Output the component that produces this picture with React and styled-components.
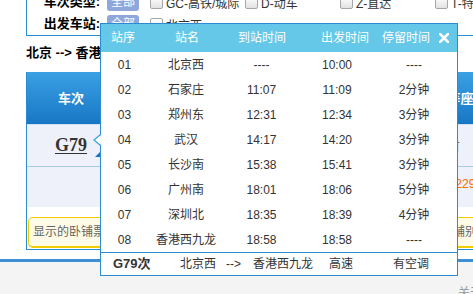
import React from "react";
import styled, { createGlobalStyle } from "styled-components";

const GlobalStyle = createGlobalStyle`
  html, body {
    margin: 0;
    padding: 0;
    background: #fff;
  }
  body {
    font-family: "Liberation Sans", "Noto Sans CJK SC", sans-serif;
    font-size: 12px;
    color: #333;
  }
`;

const Page = styled.div`
  position: relative;
  width: 100%;
  height: 294px;
  overflow: hidden;
  display: flex;
  flex-direction: column;
`;

const Main = styled.div`
  width: 960px;
  padding: 0 0 9px 26px;
`;

const FilterBox = styled.div`
  margin-top: -9px;
  border-left: 1px solid #2b8bd0;
  border-bottom: 1px solid #2b8bd0;
`;

const FilterRow = styled.div`
  display: flex;
  align-items: center;
  height: 22px;
`;

const FilterLabel = styled.span`
  width: 73px;
  text-align: right;
  font-size: 13px;
  font-weight: bold;
  color: #000;
  line-height: 22px;
`;

const AllTag = styled.span`
  margin: 0 11px 0 7px;
  width: 32px;
  height: 18px;
  line-height: 18px;
  text-align: center;
  background: #8fa7da;
  color: #fff;
  border-radius: 3px;
`;

const Option = styled.label`
  display: flex;
  align-items: center;
  width: 95px;
  flex-shrink: 0;
  color: #333;
`;

const Check = styled.span`
  box-sizing: border-box;
  width: 13px;
  height: 13px;
  margin-right: 3px;
  border: 1px solid #a6a6a6;
  border-radius: 2px;
  background: linear-gradient(#fff, #e2e2e2);
`;

const RouteTitle = styled.div`
  margin: 9px 0 11px;
  line-height: 16px;
  font-size: 13px;
  font-weight: bold;
  color: #000;
`;

const ResultBox = styled.div`
  border-left: 1px solid #2b8bd0;
  border-bottom: 1px solid #2b8bd0;
`;

const cols = "88px 80px 80px 70px 73px 72px 72px 72px";

const TableHead = styled.div`
  display: grid;
  grid-template-columns: ${cols};
  align-items: center;
  height: 52px;
  background: linear-gradient(#3ba0e4, #1877c5);
  color: #fff;
  font-size: 13px;
  font-weight: bold;
  text-align: center;
  line-height: 17px;
`;

const TrainRow = styled.div`
  display: grid;
  grid-template-columns: ${cols};
  align-items: center;
  box-sizing: border-box;
  height: ${(p) => p.$h}px;
  background: #eef1f9;
  border-top: ${(p) => (p.$first ? "1px solid #cfe0f1" : "none")};
  border-bottom: ${(p) => (p.$first ? "1px solid #a8cdea" : "none")};
  text-align: center;
`;

const TrainCell = styled.div`
  position: relative;
  height: 100%;
  display: flex;
  align-items: center;
  justify-content: center;
`;

const TrainLink = styled.a`
  font-family: "Liberation Serif", serif;
  font-size: 18px;
  font-weight: bold;
  color: #333;
  text-decoration: underline;
  text-underline-offset: 2px;
`;

const Corner = styled.span`
  position: absolute;
  right: 15px;
  top: 27px;
  width: 0;
  height: 0;
  border-bottom: 5px solid #1d6fd8;
  border-left: 5px solid transparent;
`;

const Price = styled.div`
  align-self: start;
  padding: 10px 0 0 24px;
  text-align: left;
  line-height: 14px;
  color: #ff6a00;
  white-space: nowrap;
`;

const Notice = styled.div`
  box-sizing: border-box;
  margin: 10px 0 1px 1px;
  width: 900px;
  height: 31px;
  padding-left: 4px;
  line-height: 28px;
  border: 1px solid #f2cc00;
  border-bottom-width: 2px;
  border-radius: 5px;
  background: #fffbe6;
  color: #666;
  white-space: nowrap;
`;

const BottomBar = styled.div`
  flex: 1;
  border-top: 3px solid #3d8fd6;
  background: #f4f4f4;
  padding: 24px 0 0 458px;
  line-height: 14px;
  color: #999;
  white-space: nowrap;
`;

const Popup = styled.div`
  position: absolute;
  left: 100px;
  top: 23px;
  width: 358px;
  box-sizing: border-box;
  border: 1px solid #2b8bd0;
  background: #fff;
`;

const Arrow = styled.span`
  position: absolute;
  left: -8px;
  top: 110px;
  width: 0;
  height: 0;
  border-top: 6px solid transparent;
  border-bottom: 6px solid transparent;
  border-right: 7px solid #3aa7dc;

  &::after {
    content: "";
    position: absolute;
    left: 2px;
    top: -5px;
    border-top: 5px solid transparent;
    border-bottom: 5px solid transparent;
    border-right: 6px solid #fff;
  }
`;

const PopHead = styled.div`
  display: grid;
  grid-template-columns: 64px 63px 83px 61px 57px 1fr;
  align-items: center;
  height: 28px;
  padding-left: 10px;
  background: #66c8e8;
  color: #fff;
  line-height: 16px;
`;

const CloseBtn = styled.span`
  display: flex;
  align-items: center;
  cursor: pointer;
`;

const StopRow = styled.div`
  display: grid;
  grid-template-columns: 47px 76px 75px 76px 78px;
  align-items: center;
  height: 25px;
  text-align: center;
  line-height: 16px;
  color: #333;
`;

const PopFoot = styled.div`
  display: grid;
  grid-template-columns: 67px 46px 27px 76px 64px 1fr;
  align-items: center;
  height: 22px;
  padding-left: 12px;
  border-top: 1px solid #2b8bd0;
  line-height: 16px;
  color: #333;
  white-space: nowrap;
`;

const FootTrain = styled.span`
  font-size: 13px;
  font-weight: bold;
`;

const stops = [
  ["01", "北京西", "----", "10:00", "----"],
  ["02", "石家庄", "11:07", "11:09", "2分钟"],
  ["03", "郑州东", "12:31", "12:34", "3分钟"],
  ["04", "武汉", "14:17", "14:20", "3分钟"],
  ["05", "长沙南", "15:38", "15:41", "3分钟"],
  ["06", "广州南", "18:01", "18:06", "5分钟"],
  ["07", "深圳北", "18:35", "18:39", "4分钟"],
  ["08", "香港西九龙", "18:58", "18:58", "----"],
];

const trainTypes = ["GC-高铁/城际", "D-动车", "Z-直达", "T-特快", "K-快速"];

export default function App() {
  return (
    <Page>
      <GlobalStyle />
      <Main>
        <FilterBox>
          <FilterRow>
            <FilterLabel>车次类型:</FilterLabel>
            <AllTag>全部</AllTag>
            {trainTypes.map((t) => (
              <Option key={t}>
                <Check />
                {t}
              </Option>
            ))}
          </FilterRow>
          <FilterRow>
            <FilterLabel>出发车站:</FilterLabel>
            <AllTag>全部</AllTag>
            <Option>
              <Check />
              北京西
            </Option>
          </FilterRow>
        </FilterBox>

        <RouteTitle>北京 --&gt; 香港西九龙（12月30日 周日）共计1个车次</RouteTitle>

        <ResultBox>
          <TableHead>
            <span>车次</span>
            <span>出发站<br />到达站</span>
            <span>出发时间<br />到达时间</span>
            <span>历时</span>
            <span>商务座<br />特等座</span>
            <span>一等座</span>
            <span>二等座</span>
            <span>高级<br />软卧</span>
          </TableHead>
          <TrainRow $h={43} $first>
            <TrainCell>
              <TrainLink>G79</TrainLink>
              <Corner />
            </TrainCell>
            <span>北京西</span>
            <span>10:00</span>
            <span>08:58</span>
            <span>有</span>
            <span>有</span>
            <span>有</span>
            <span>--</span>
          </TrainRow>
          <TrainRow $h={40}>
            <span />
            <span />
            <span />
            <span />
            <span />
            <Price>¥1229.0</Price>
            <span />
            <span />
          </TrainRow>
          <Notice>
            显示的卧铺票价均为上铺票价，供您参考。具体票价以您确认支付时实际购买的铺别票价为准。
          </Notice>
        </ResultBox>
      </Main>

      <BottomBar>关于我们 | 网站声明</BottomBar>

      <Popup>
        <Arrow />
        <PopHead>
          <span>站序</span>
          <span>站名</span>
          <span>到站时间</span>
          <span>出发时间</span>
          <span>停留时间</span>
          <CloseBtn>
            <svg width="10" height="10" viewBox="0 0 10 10">
              <path d="M1 1L9 9M9 1L1 9" stroke="#fff" strokeWidth="2.6" strokeLinecap="square" />
            </svg>
          </CloseBtn>
        </PopHead>
        {stops.map((s) => (
          <StopRow key={s[0]}>
            {s.map((v, i) => (
              <span key={i}>{v}</span>
            ))}
          </StopRow>
        ))}
        <PopFoot>
          <FootTrain>G79次</FootTrain>
          <span>北京西</span>
          <span>--&gt;</span>
          <span>香港西九龙</span>
          <span>高速</span>
          <span>有空调</span>
        </PopFoot>
      </Popup>
    </Page>
  );
}
